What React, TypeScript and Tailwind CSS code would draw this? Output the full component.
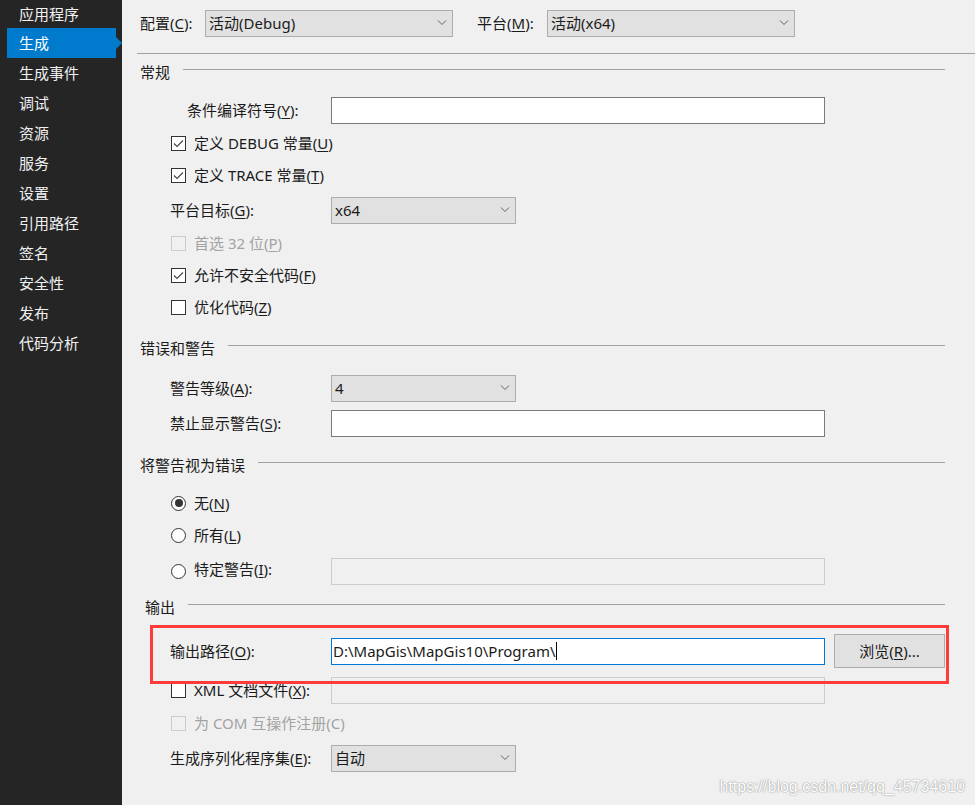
import React from "react";

const navItems = ["应用程序", "生成", "生成事件", "调试", "资源", "服务", "设置", "引用路径", "签名", "安全性", "发布", "代码分析"];

const font = "font-['Noto_Sans','Noto_Sans_CJK_SC',sans-serif]";

const U = ({ children }: { children: React.ReactNode }) => <span className="underline underline-offset-2">{children}</span>;

const Chevron = () => (
    <svg width="10" height="6" viewBox="0 0 10 6" className="shrink-0">
        <path d="M1 0.5 L5 4.5 L9 0.5" fill="none" stroke="#606060" strokeWidth="1" />
    </svg>
);

const Select = ({ value, w }: { value: string; w: string }) => (
    <div className={`${w} h-[27px] bg-[#e1e1e1] border border-[#adadad] flex items-center justify-between pl-[3px] pr-[5px]`}>
        <span>{value}</span>
        <Chevron />
    </div>
);

const Check = ({ checked, disabled }: { checked?: boolean; disabled?: boolean }) => (
    <div
        className={`w-[15px] h-[15px] border flex items-center justify-center shrink-0 ${
            disabled ? "border-[#cccccc] bg-[#f0f0f0]" : "border-[#333333] bg-white"
        }`}>
        {checked && (
            <svg width="11" height="9" viewBox="0 0 11 9">
                <path d="M1 4.5 L4 7.5 L10 1.5" fill="none" stroke="#444" strokeWidth="1.1" />
            </svg>
        )}
    </div>
);

const Radio = ({ checked }: { checked?: boolean }) => (
    <div className="w-[15px] h-[15px] rounded-full border border-[#333333] bg-white flex items-center justify-center shrink-0">
        {checked && <div className="w-[8px] h-[8px] rounded-full bg-[#333333]" />}
    </div>
);

const SectionHeader = ({ title, mt, pl = "pl-[18px]" }: { title: string; mt: string; pl?: string }) => (
    <div className={`flex items-center h-[28px] ${mt} ${pl} pr-[30px]`}>
        <span>{title}</span>
        <div className="flex-1 ml-[13px] mb-[6px] border-t border-[#a0a0a0]" />
    </div>
);

export default function App() {
    return (
        <div className={`w-[975px] h-[805px] flex overflow-hidden text-[15px] text-[#1b1b1b] ${font}`}>
            {/* sidebar */}
            <div className="w-[122px] h-full bg-[#252526] text-[#f1f1f1] flex flex-col shrink-0">
                {navItems.map((item, i) =>
                    item === "生成" ? (
                        <div key={item} className="flex items-center h-[30px]">
                            <div className="ml-[7px] w-[109px] h-full bg-[#007acc] flex items-center pl-[12px] text-white">{item}</div>
                            <div className="w-0 h-0 border-y-[6px] border-y-transparent border-l-[6px] border-l-[#007acc]" />
                        </div>
                    ) : (
                        <div key={item} className={`flex items-center pl-[19px] ${i === 0 ? "h-[28px]" : "h-[30px]"}`}>
                            {item}
                        </div>
                    )
                )}
            </div>

            {/* main panel */}
            <div className="relative flex-1 h-full bg-[#f0f0f0] flex flex-col">
                <div className="flex items-center h-[28px] mt-[9px] pl-[18px]">
                    <span className="w-[65px]">
                        配置(<U>C</U>):
                    </span>
                    <Select value="活动(Debug)" w="w-[248px]" />
                    <span className="ml-[24px] w-[70px]">
                        平台(<U>M</U>):
                    </span>
                    <Select value="活动(x64)" w="w-[248px]" />
                </div>
                <div className="mt-[16px] ml-[15px] border-t border-[#a0a0a0]" />

                <SectionHeader title="常规" mt="mt-[4px]" />

                <div className="flex items-center h-[28px] mt-[10px] pl-[65px]">
                    <span className="w-[144px]">
                        条件编译符号(<U>Y</U>):
                    </span>
                    <div className="w-[494px] h-[27px] bg-white border border-[#7a7a7a]" />
                </div>
                <div className="flex items-center h-[28px] mt-[5px] pl-[49px] gap-[8px]">
                    <Check checked />
                    <span>
                        定义 DEBUG 常量(<U>U</U>)
                    </span>
                </div>
                <div className="flex items-center h-[28px] mt-[4px] pl-[49px] gap-[8px]">
                    <Check checked />
                    <span>
                        定义 TRACE 常量(<U>T</U>)
                    </span>
                </div>
                <div className="flex items-center h-[28px] mt-[7px] pl-[48px]">
                    <span className="w-[161px]">
                        平台目标(<U>G</U>):
                    </span>
                    <Select value="x64" w="w-[185px]" />
                </div>
                <div className="flex items-center h-[28px] mt-[5px] pl-[49px] gap-[8px] text-[#a3a3a3]">
                    <Check disabled />
                    <span>
                        首选 32 位(<U>P</U>)
                    </span>
                </div>
                <div className="flex items-center h-[28px] mt-[4px] pl-[49px] gap-[8px]">
                    <Check checked />
                    <span>
                        允许不安全代码(<U>F</U>)
                    </span>
                </div>
                <div className="flex items-center h-[28px] mt-[4px] pl-[49px] gap-[8px]">
                    <Check />
                    <span>
                        优化代码(<U>Z</U>)
                    </span>
                </div>

                <SectionHeader title="错误和警告" mt="mt-[13px]" />

                <div className="flex items-center h-[28px] mt-[12px] pl-[48px]">
                    <span className="w-[161px]">
                        警告等级(<U>A</U>):
                    </span>
                    <Select value="4" w="w-[185px]" />
                </div>
                <div className="flex items-center h-[28px] mt-[7px] pl-[48px]">
                    <span className="w-[161px]">
                        禁止显示警告(<U>S</U>):
                    </span>
                    <div className="w-[494px] h-[27px] bg-white border border-[#7a7a7a]" />
                </div>

                <SectionHeader title="将警告视为错误" mt="mt-[14px]" />

                <div className="flex items-center h-[28px] mt-[10px] pl-[49px] gap-[8px]">
                    <Radio checked />
                    <span>
                        无(<U>N</U>)
                    </span>
                </div>
                <div className="flex items-center h-[28px] mt-[4px] pl-[49px] gap-[8px]">
                    <Radio />
                    <span>
                        所有(<U>L</U>)
                    </span>
                </div>
                <div className="flex items-center h-[28px] mt-[8px] pl-[49px]">
                    <Radio />
                    <span className="ml-[8px] w-[137px] mb-[4px]">
                        特定警告(<U>I</U>):
                    </span>
                    <div className="w-[494px] h-[27px] bg-[#f0f0f0] border border-[#cccccc]" />
                </div>

                <SectionHeader title="输出" mt="mt-[8px]" pl="pl-[23px]" />

                <div className="flex items-center h-[34px] mt-[13px] pl-[48px]">
                    <span className="w-[161px]">
                        输出路径(<U>O</U>):
                    </span>
                    <div className="w-[494px] h-[27px] bg-white border border-[#0078d7] flex items-center pl-[1px]">
                        <span>D:\MapGis\MapGis10\Program\</span>
                        <span className="w-[1px] h-[18px] bg-black" />
                    </div>
                    <div className="ml-[9px] w-[111px] h-[34px] bg-[#e1e1e1] border border-[#adadad] flex items-center justify-center">
                        浏览(<U>R</U>)...
                    </div>
                </div>
                <div className="flex items-center h-[28px] mt-[8px] pl-[49px]">
                    <Check />
                    <span className="ml-[8px] w-[137px]">
                        XML 文档文件(<U>X</U>):
                    </span>
                    <div className="w-[494px] h-[27px] bg-[#f0f0f0] border border-[#cccccc]" />
                </div>
                <div className="flex items-center h-[28px] mt-[5px] pl-[49px] gap-[8px] text-[#a3a3a3]">
                    <Check disabled />
                    <span>为 COM 互操作注册(C)</span>
                </div>
                <div className="flex items-center h-[28px] mt-[7px] pl-[48px]">
                    <span className="w-[161px]">
                        生成序列化程序集(<U>E</U>):
                    </span>
                    <Select value="自动" w="w-[185px]" />
                </div>

                {/* red highlight overlay */}
                <div className="absolute left-[28px] top-[625px] w-[799px] h-[59px] border-[3px] border-[#ff3b3b] pointer-events-none" />

                {/* watermark */}
                <div className="absolute right-[10px] top-[775px] text-[16px] text-white font-['Liberation_Sans',sans-serif] [text-shadow:0_0_1px_#8a8a8a,0_0_2px_#b0b0b0]">
                    https://blog.csdn.net/qq_45734610
                </div>
            </div>
        </div>
    );
}
